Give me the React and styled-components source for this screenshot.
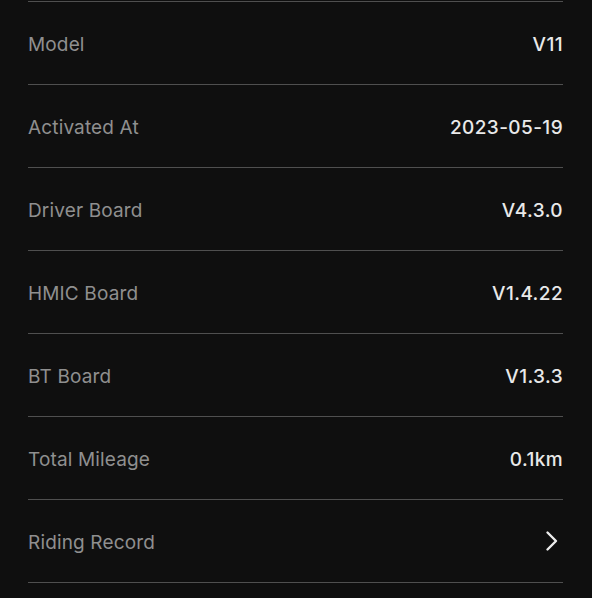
import styled, { createGlobalStyle } from "styled-components";

const GlobalStyle = createGlobalStyle`
  html, body {
    margin: 0;
    padding: 0;
    background: #0f0f0f;
  }
  body {
    font-family: Inter, "Noto Sans", "Liberation Sans", sans-serif;
    -webkit-font-smoothing: antialiased;
  }
`;

const rows = [
  { label: "Model", value: "V11" },
  { label: "Activated At", value: "2023-05-19" },
  { label: "Driver Board", value: "V4.3.0" },
  { label: "HMIC Board", value: "V1.4.22" },
  { label: "BT Board", value: "V1.3.3" },
  { label: "Total Mileage", value: "0.1km" },
  { label: "Riding Record", link: true },
];

const Chevron = () => (
  <svg width="14" height="22" viewBox="0 0 14 22" fill="none">
    <path
      d="M2.5 2.5 L11 11 L2.5 19.5"
      stroke="#ececec"
      strokeWidth="2.4"
      strokeLinecap="round"
      strokeLinejoin="round"
    />
  </svg>
);

const App = () => {
  return (
    <>
      <GlobalStyle />
      <Page>
        <List>
          {rows.map((row) => (
            <Row key={row.label}>
              <Label>{row.label}</Label>
              {row.link ? (
                <Arrow>
                  <Chevron />
                </Arrow>
              ) : (
                <Value>{row.value}</Value>
              )}
            </Row>
          ))}
        </List>
      </Page>
    </>
  );
};

const Page = styled.div`
  width: 592px;
  height: 598px;
  overflow: hidden;
  background: #0f0f0f;
  padding: 1px 29px 0 28px;
  box-sizing: border-box;
`;

const List = styled.div`
  display: flex;
  flex-direction: column;
  border-top: 1.5px solid #4f4f4f;
`;

const Row = styled.div`
  height: 83px;
  box-sizing: border-box;
  display: flex;
  align-items: center;
  justify-content: space-between;
  border-bottom: 1.5px solid #4f4f4f;
  padding: 2px 0 0 0;
`;

const Label = styled.span`
  font-size: 19px;
  color: #8f8f8f;
  letter-spacing: 0.15px;
`;

const Value = styled.span`
  font-size: 19px;
  font-weight: 500;
  color: #e9e9e9;
  letter-spacing: 0.4px;
`;

const Arrow = styled.span`
  display: flex;
  align-items: center;
  margin-right: 4px;
  margin-top: -2px;
`;

export default App;
